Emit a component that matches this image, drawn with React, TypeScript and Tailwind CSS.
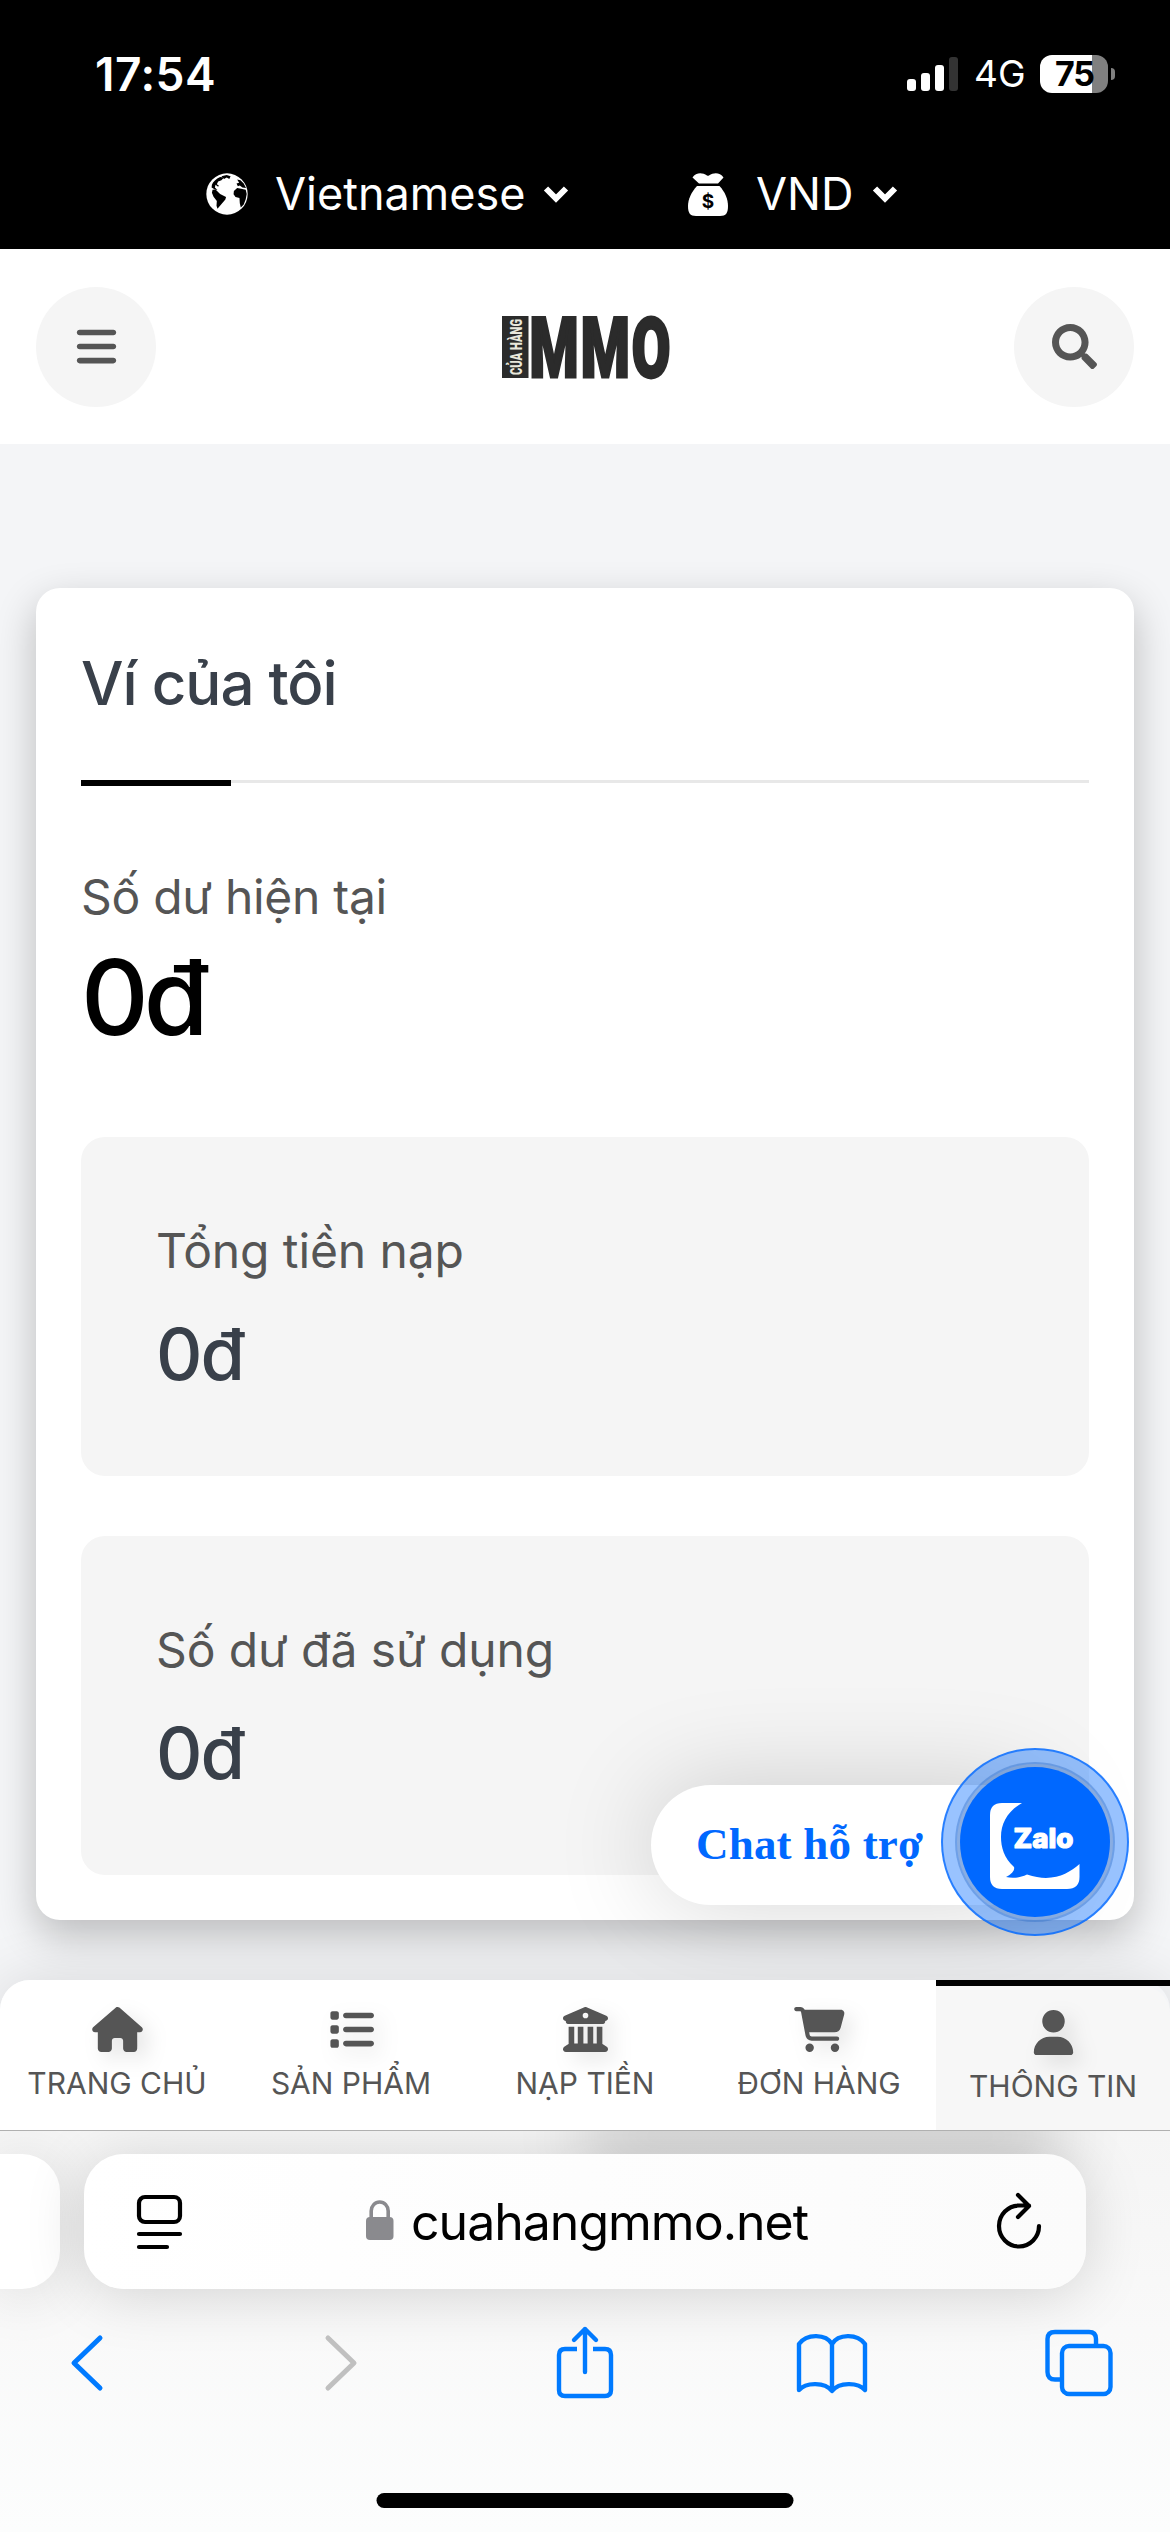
import React from "react";
import {
  FaBars,
  FaHouse,
  FaList,
  FaBuildingColumns,
  FaCartShopping,
  FaUser,
} from "react-icons/fa6";
import { FaSearch } from "react-icons/fa";

function Chevron() {
  return (
    <svg viewBox="0 0 26 18" className="h-[18px] w-[26px]">
      <path d="M3 3.500 L13 13.500 L23 3.500" fill="none" stroke="#fff" strokeWidth="6" />
    </svg>
  );
}

function Globe() {
  return (
    <svg viewBox="30 28 126 128" className="size-[42px]">
      <circle cx="93" cy="92" r="63" fill="#fff" />
      <g fill="#000">
        <path d="M49 79 L58 78 L72 92 L90 101 L88 109 L75 124 L64 137 L61 128 L62 113 L52 100 L47 88 Z" />
        <path d="M114 83 L124 74 L136 76 L150 79 L153 92 L150 108 L144 124 L135 133 L132 120 L131 104 L119 101 L113 93 Z" />
        <path d="M47 64 C50 54 60 46 72 40 L84 42 L76 50 L66 54 L62 62 L68 66 L66 70 L58 64 L56 72 L64 80 L56 78 L46 72 Z" />
        <path d="M76 38 L92 34 L104 38 L100 46 L92 42 L84 46 Z" />
        <path d="M124 48 L134 50 L144 60 L151 74 L140 72 L132 66 L126 68 L122 60 L130 58 Z" />
      </g>
    </svg>
  );
}

function MoneyBag() {
  return (
    <svg viewBox="0 0 40 43" className="h-[43px] w-[40px]">
      <path
        d="M11 10.500 L4.500 4.500 C8 -0.500 14 -1 19 2.600 Q20 3.100 21 2.600 C26 -1 32 -0.500 35.500 4.500 L30 10.500 Z"
        fill="#fff"
      />
      <path
        d="M9 13 H31.500 C37 19 40 26 40 33 C40 40 38 43 32 43 H8 C2 43 0 40 0 33 C0 26 3.500 19 9 13 Z"
        fill="#fff"
      />
      <text x="20" y="35" textAnchor="middle" fontSize="19" fontWeight="700" fontFamily="Inter, sans-serif" fill="#000">
        $
      </text>
    </svg>
  );
}

function StatusBar() {
  return (
    <div className="flex h-[150px] items-start justify-between pr-[55px] pl-[95px] text-white">
      <div className="mt-[46px] text-[46px] leading-[56px] font-semibold tracking-[0.5px]">17:54</div>
      <div className="mt-[55px] flex h-[38px] items-center">
        <div className="flex h-[34px] items-end gap-[5px]">
          <div className="h-[12px] w-[9px] rounded-[3px] bg-white" />
          <div className="h-[18px] w-[9px] rounded-[3px] bg-white" />
          <div className="h-[26px] w-[9px] rounded-[3px] bg-white" />
          <div className="h-[34px] w-[9px] rounded-[3px] bg-[#333]" />
        </div>
        <div className="ml-[16px] w-[66px] text-[37px] leading-[44px]">4G</div>
        <div className="flex h-[38px] w-[68px] items-center justify-center rounded-[12px] bg-[linear-gradient(90deg,#fff_76%,#808080_76%)] pl-[1px] text-[34px] leading-[38px] font-bold tracking-[-1px] text-black">
          75
        </div>
        <div className="ml-[3px] h-[12px] w-[4px] rounded-r-full bg-[#808080]" />
      </div>
    </div>
  );
}

function LocaleBar() {
  return (
    <div className="flex h-[99px] items-start pt-[10px] pl-[206px] text-[45px] leading-[68px] text-white">
      <div className="flex w-[482px] items-center">
        <Globe />
        <span className="ml-[27px]">Vietnamese</span>
        <span className="ml-[18px]">
          <Chevron />
        </span>
      </div>
      <div className="flex items-center">
        <MoneyBag />
        <span className="ml-[28px]">VND</span>
        <span className="ml-[19px]">
          <Chevron />
        </span>
      </div>
    </div>
  );
}

function Logo() {
  return (
    <svg viewBox="0 0 172 66" className="ml-[3px] h-[66px] w-[172px] overflow-visible">
      <rect x="1" y="2" width="26.500" height="62" fill="#2b2b2b" />
      <text
        transform="translate(20.500 61) rotate(-90)"
        fontFamily="Roboto, sans-serif"
        fontWeight="900"
        fontSize="16"
        fill="#e9e8dc"
        textLength="56"
        lengthAdjust="spacingAndGlyphs"
      >
        CỦA HÀNG
      </text>
      <text
        x="28.500"
        y="62.500"
        fontFamily="Roboto, sans-serif"
        fontWeight="900"
        fontSize="84"
        fill="#2b2b2b"
        stroke="#2b2b2b"
        strokeWidth="3"
        textLength="143"
        lengthAdjust="spacingAndGlyphs"
        letterSpacing="3"
      >
        MMO
      </text>
    </svg>
  );
}

function Header() {
  return (
    <header className="flex h-[195px] items-center justify-between bg-white px-[36px] text-[#555]">
      <button className="flex size-[120px] items-center justify-center rounded-full bg-[#f5f5f5]">
        <FaBars className="size-[45px]" />
      </button>
      <Logo />
      <button className="flex size-[120px] items-center justify-center rounded-full bg-[#f5f5f5]">
        <FaSearch className="size-[45px]" />
      </button>
    </header>
  );
}

function StatBox({ label, value }: { label: string; value: string }) {
  return (
    <div className="h-[339px] rounded-[24px] bg-[#f5f5f5] px-[75px] pt-[75px]">
      <div className="text-[48px] leading-[78px] tracking-[-0.1px] text-[#555]">{label}</div>
      <div className="mt-[10px] text-[72px] leading-[108px] font-medium tracking-[-2px] text-[#39404a]">{value}</div>
    </div>
  );
}

function WalletCard() {
  return (
    <section className="mx-[36px] h-[1332px] rounded-[24px] bg-white px-[45px] pt-[45px] shadow-[0_15px_40px_rgba(0,0,0,0.24)]">
      <h2 className="h-[147px] text-[60px] leading-[100px] font-medium tracking-[-1px] text-[#39404a]">Ví của tôi</h2>
      <div className="h-[6px] border-t-[3px] border-[#e8e8e8]">
        <div className="-mt-[3px] h-[6px] w-[150px] bg-black" />
      </div>
      <div className="mt-[75px] text-[48px] leading-[72px] tracking-[-0.3px] text-[#555]">Số dư hiện tại</div>
      <div className="mt-[4px] mb-[80px] text-[105px] leading-[120px] font-medium tracking-[-5px] text-black">0đ</div>
      <div className="flex flex-col gap-[60px]">
        <StatBox label="Tổng tiền nạp" value="0đ" />
        <StatBox label="Số dư đã sử dụng" value="0đ" />
      </div>
    </section>
  );
}

function ZaloChat() {
  return (
    <div className="absolute top-[1748px] left-[651px] flex h-[188px] w-[478px] items-center">
      <div className="mt-[6px] flex h-[120px] w-[400px] items-center rounded-full bg-white pl-[45px] font-['Liberation_Serif',serif] text-[45px] font-bold tracking-[0.2px] text-[#0068ff] shadow-[0_0_100px_rgba(0,0,0,0.17)]">
        Chat hỗ trợ
      </div>
      <div className="absolute right-0 flex size-[188px] items-center justify-center rounded-full border-2 border-[#0068ff]/75 bg-[#0068ff]/40">
        <div className="flex size-[160px] items-center justify-center rounded-full border-2 border-[#0068ff]/20 bg-[#5a6f90]/25">
          <div className="flex size-[150px] shrink-0 items-center justify-center rounded-full bg-[#0068ff]">
            <svg viewBox="0 0 90 86" className="mt-[8px] h-[86px] w-[90px]">
              <path
                d="M32 0 H12 Q0 0 0 12 V74 Q0 86 12 86 H77 Q89.500 86 89.500 74 V61 C78 71 62 80 37 71.500 C30 75 22 75.500 16 74 C22 71 25 67 24 64 C14 55 11 44 11 34 C11 20 18 8 32 0 Z"
                fill="#fff"
              />
              <text
                x="23.500"
                y="45"
                fontFamily="Inter, sans-serif"
                fontWeight="800"
                fontSize="27.500"
                fill="#fff"
                stroke="#fff"
                strokeWidth="1.200"
                strokeLinejoin="round"
                textLength="60"
                lengthAdjust="spacingAndGlyphs"
              >
                Zalo
              </text>
            </svg>
          </div>
        </div>
      </div>
    </div>
  );
}

const tabs = [
  { label: "TRANG CHỦ", Icon: FaHouse, width: "w-[51px]" },
  { label: "SẢN PHẨM", Icon: FaList, width: "w-[45px]" },
  { label: "NẠP TIỀN", Icon: FaBuildingColumns, width: "w-[45px]" },
  { label: "ĐƠN HÀNG", Icon: FaCartShopping, width: "w-[51px]" },
];

function BottomNav() {
  return (
    <nav className="relative mt-[60px] grid h-[150px] grid-cols-5 rounded-t-[30px] text-[30px] leading-[45px] text-[#555] shadow-[0_0_60px_rgba(0,0,0,0.12)]">
      {tabs.map(({ label, Icon, width }) => (
        <div key={label} className="flex flex-col items-center bg-white pt-[27px] first:rounded-tl-[30px]">
          <Icon className={`h-[45px] drop-shadow-[8px_8px_10px_rgba(0,0,0,0.1)] ${width}`} />
          <span className="mt-[9px]">{label}</span>
        </div>
      ))}
      <div>
        <div className="h-[6px] bg-black" />
        <div className="flex h-[144px] flex-col items-center rounded-tr-[28px] bg-[#f7f7f7] pt-[24px]">
          <FaUser className="h-[45px] w-[45px] drop-shadow-[8px_8px_10px_rgba(0,0,0,0.1)]" />
          <span className="mt-[9px]">THÔNG TIN</span>
        </div>
      </div>
    </nav>
  );
}

function AddressBar() {
  return (
    <div className="flex h-[135px] gap-[24px]">
      <div className="w-[60px] rounded-r-[38px] bg-white shadow-[0_6px_60px_rgba(0,0,0,0.12)]" />
      <div className="flex w-[1002px] items-center rounded-[40px] bg-[linear-gradient(90deg,#fff,#fbfbfb)] pl-[51px] shadow-[0_6px_60px_rgba(0,0,0,0.15)]">
        <svg viewBox="0 0 50 58" className="h-[58px] w-[50px]" fill="none" stroke="#000" strokeWidth="4.200" strokeLinecap="round">
          <rect x="4" y="4" width="41" height="25" rx="6" />
          <path d="M4 41 H45 M4 54 H32" />
        </svg>
        <svg viewBox="0 0 28 40" className="mb-[4px] ml-[181px] h-[40px] w-[28px]">
          <rect x="0" y="17" width="27.500" height="23" rx="4" fill="#8a8a8e" />
          <path d="M5.200 18 V11 A8.500 9 0 0 1 22.200 11 V18" fill="none" stroke="#8a8a8e" strokeWidth="3.600" />
        </svg>
        <span className="ml-[17px] w-[584px] text-[50px] leading-[58px] tracking-[-1px] text-black">cuahangmmo.net</span>
        <svg
          viewBox="0 0 48 58"
          className="mb-[4px] h-[58px] w-[48px] shrink-0"
          fill="none"
          stroke="#000"
          strokeWidth="4.200"
          strokeLinecap="round"
          strokeLinejoin="round"
        >
          <path d="M44 35 A20 20.500 0 1 1 24 14.500 H34 M23 4 L34 15 L23 26" />
        </svg>
      </div>
    </div>
  );
}

function Toolbar() {
  return (
    <div className="mt-[34px] flex h-[80px] items-center pl-[69px] text-[#007aff]">
      <svg viewBox="0 0 36 60" className="h-[60px] w-[36px] shrink-0" fill="none" stroke="currentColor" strokeWidth="5" strokeLinecap="round" strokeLinejoin="round">
        <path d="M31 5 L5 30 L31 55" />
      </svg>
      <svg viewBox="0 0 36 60" className="ml-[218px] h-[60px] w-[36px] shrink-0" fill="none" stroke="#c0c0c0" strokeWidth="5" strokeLinecap="round" strokeLinejoin="round">
        <path d="M5 5 L31 30 L5 55" />
      </svg>
      <svg viewBox="0 0 58 74" className="mb-[2px] ml-[197px] h-[74px] w-[58px] shrink-0" fill="none" stroke="currentColor" strokeWidth="4.400" strokeLinecap="round" strokeLinejoin="round">
        <path d="M21 24 H9 Q3 24 3 30 V65 Q3 71 9 71 H49 Q55 71 55 65 V30 Q55 24 49 24 H37" strokeLinecap="butt" />
        <path d="M29 47 V4 M18 15 L29 4 L40 15" />
      </svg>
      <svg viewBox="0 0 74 62" className="ml-[181px] h-[62px] w-[74px] shrink-0" fill="none" stroke="currentColor" strokeWidth="4.400" strokeLinecap="round" strokeLinejoin="round">
        <path d="M37 12 C31 2 12 1 4 12 V58 C11 50 30 50 37 59 C44 50 63 50 70 58 V12 C62 1 43 2 37 12 V58" />
      </svg>
      <svg viewBox="0 0 70 68" className="ml-[175px] h-[68px] w-[70px] shrink-0" fill="none" stroke="currentColor" strokeWidth="4.400">
        <rect x="18" y="17" width="48.500" height="48" rx="7" />
        <path d="M18 50.500 H11 Q3.500 50.500 3.500 43 V10 Q3.500 3 11 3 H45 Q52 3 52 10 V17" />
      </svg>
    </div>
  );
}

function SafariChrome() {
  return (
    <footer className="relative flex h-[402px] flex-col overflow-hidden border-t border-[#b0b0b0] bg-[linear-gradient(180deg,#f5f5f5,#f9f9f9_50%,#fcfdfd)]">
      <div className="absolute -top-[30px] left-[580px] h-[70px] w-[480px] rounded-full bg-black/15 blur-[32px]" />
      <div className="relative mt-[23px]">
        <AddressBar />
        <Toolbar />
      </div>
      <div className="absolute bottom-[24px] left-1/2 h-[15px] w-[417px] -translate-x-1/2 rounded-full bg-black" />
    </footer>
  );
}

export default function App() {
  return (
    <div className="relative h-[2532px] w-[1170px] overflow-hidden bg-[#f4f5f7] font-['Inter',sans-serif]">
      <div className="bg-black">
        <StatusBar />
        <LocaleBar />
      </div>
      <Header />
      <main className="pt-[144px]">
        <WalletCard />
      </main>
      <ZaloChat />
      <BottomNav />
      <SafariChrome />
    </div>
  );
}
